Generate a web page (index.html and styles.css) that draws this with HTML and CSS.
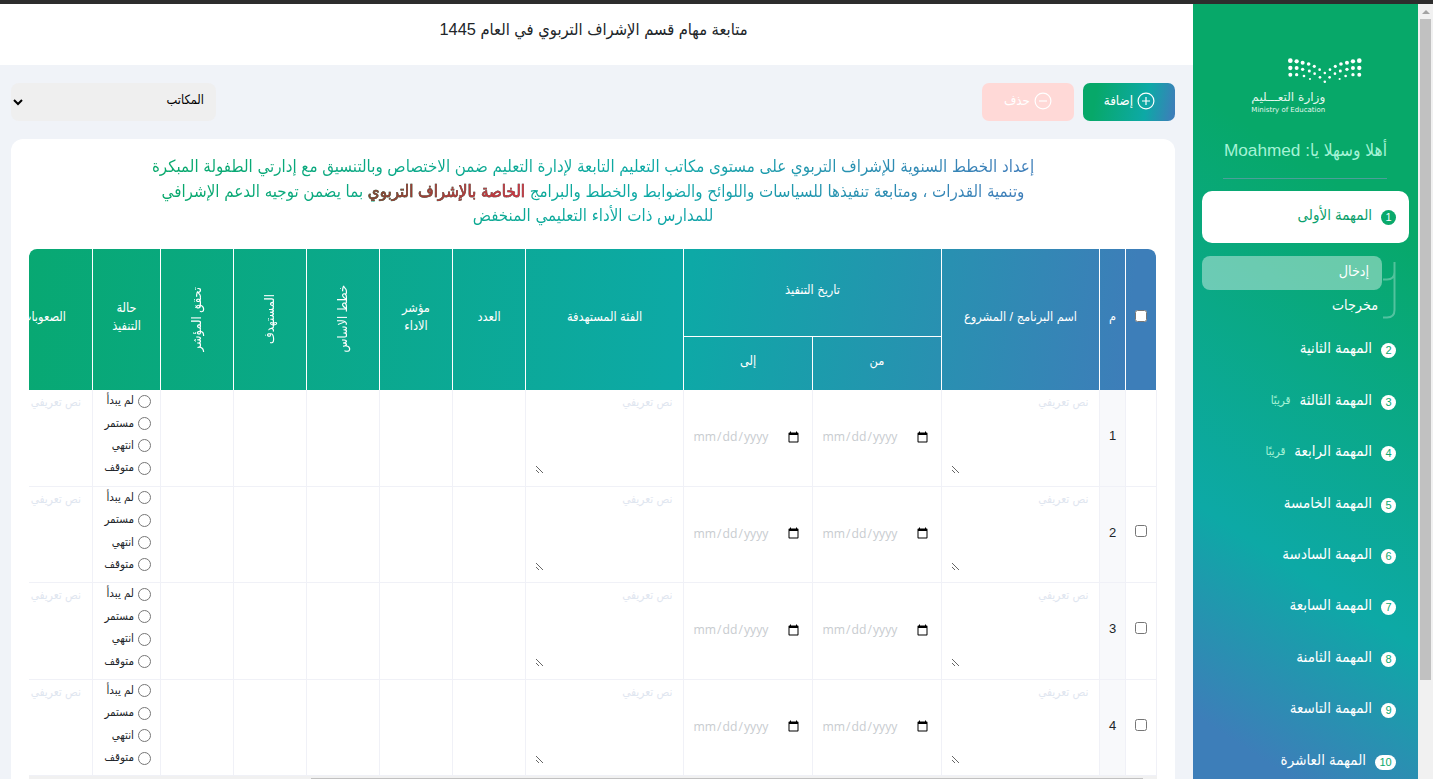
FILE: index.html
```html
<!DOCTYPE html>
<html lang="ar" dir="rtl">
<head>
<meta charset="utf-8">
<title>متابعة مهام قسم الإشراف التربوي</title>
<link rel="stylesheet" href="styles.css">
</head>
<body>
<div class="topline"></div>
<div class="app">
  <div class="scroll"><i class="scroll-up"></i><i class="scroll-thumb"></i></div>
  <aside class="side">
    <svg class="logo" viewBox="170 170 340 175">
      <g id="logo-dots" fill="#fff"></g>
      <text x="396" y="301" font-size="34" textLength="222" lengthAdjust="spacingAndGlyphs" fill="#e4f7ee">وزارة التعـــليم</text>
      <text class="en" x="174" y="335" font-size="21" textLength="222" lengthAdjust="spacingAndGlyphs" fill="#e4f7ee">Ministry of Education</text>
    </svg>
    <div class="hello"><span>أهلا وسهلا يا: Moahmed</span></div>
    <nav>
      <a class="item active"><b>1</b><span>المهمة الأولى</span></a>
      <div class="sub">
        <svg class="branch" width="14" height="58"><path d="M11.500 0V48Q11.500 55.500 4 55.500H0M11.500 10Q11.500 17.500 4 17.500H0" fill="none" stroke="#fff" stroke-opacity=".3" stroke-width="2"/></svg>
        <a class="sub-on"><span>إدخال</span></a>
        <a class="sub-off"><span>مخرجات</span></a>
      </div>
      <a class="item"><b>2</b><span>المهمة الثانية</span></a>
      <a class="item"><b>3</b><span>المهمة الثالثة</span><small>قريبًا</small></a>
      <a class="item"><b>4</b><span>المهمة الرابعة</span><small>قريبًا</small></a>
      <a class="item"><b>5</b><span>المهمة الخامسة</span></a>
      <a class="item"><b>6</b><span>المهمة السادسة</span></a>
      <a class="item"><b>7</b><span>المهمة السابعة</span></a>
      <a class="item"><b>8</b><span>المهمة الثامنة</span></a>
      <a class="item"><b>9</b><span>المهمة التاسعة</span></a>
      <a class="item"><b class="wide">10</b><span>المهمة العاشرة</span></a>
    </nav>
  </aside>
  <main class="main">
    <header class="head"><span>متابعة مهام قسم الإشراف التربوي في العام 1445</span></header>
    <div class="tools">
      <button class="btn add"><svg width="18" height="18" viewBox="0 0 18 18"><circle cx="9" cy="9" r="7.900"/><path d="M9 5V13M5 9H13"/></svg><span>إضافة</span></button>
      <button class="btn del"><svg width="18" height="18" viewBox="0 0 18 18"><circle cx="9" cy="9" r="7.900"/><path d="M5 9H13"/></svg><span>حذف</span></button>
      <select class="office"><option>المكاتب</option></select>
    </div>
    <section class="card">
      <div class="title">
        <p class="l1">إعداد الخطط السنوية للإشراف التربوي على مستوى مكاتب التعليم التابعة لإدارة التعليم ضمن الاختصاص وبالتنسيق مع إدارتي الطفولة المبكرة</p>
        <p class="l2">وتنمية القدرات ، ومتابعة تنفيذها للسياسات واللوائح والضوابط والخطط والبرامج <b>الخاصة بالإشراف التربوي</b> بما يضمن توجيه الدعم الإشرافي</p>
        <p class="l3">للمدارس ذات الأداء التعليمي المنخفض</p>
      </div>
      <div class="table">
        <div class="thead">
          <div><input type="checkbox"></div>
          <div><span>م</span></div>
          <div><span>اسم البرنامج / المشروع</span></div>
          <div class="period">
            <div class="period-top"><span>تاريخ التنفيذ</span></div>
            <div><span>من</span></div>
            <div><span>إلى</span></div>
          </div>
          <div><span>الفئة المستهدفة</span></div>
          <div><span>العدد</span></div>
          <div><span>مؤشر<br>الاداء</span></div>
          <div><span class="vert">خطط الاساس</span></div>
          <div><span class="vert">المستهدف</span></div>
          <div><span class="vert">تحقق المؤشر</span></div>
          <div><span>حالة<br>التنفيذ</span></div>
          <div class="last"><span>الصعوبات</span></div>
        </div>
        <div id="rows"></div>
        <div class="hscroll"><i></i></div>
      </div>
    </section>
  </main>
</div>
<script src="script.js"></script>
</body>
</html>
```
FILE: script.js
```js
// Logo: half of the dot pattern, mirrored round the middle column.
const dots = [
  [291,181,7],[291,203,6.5],[291,223,6],[310,183,6.5],[310,203,6],[310,223,5],
  [328,187,6],[328,207,5],[332,227,4],[346,191,5.5],[348,212,4.5],[350,236,3.2],
  [363,198,4.7],[364,220,4],[379,208,4],[380,231,4]
];
const dot = (x, y, r) => `<circle cx="${x}" cy="${y}" r="${r}"/>`;
document.getElementById('logo-dots').innerHTML =
  dots.map(([x, y, r]) => dot(x, y, r) + dot(789 - x, y, r)).join('') +
  dot(394.5, 218, 3.8) + dot(394.5, 244, 3.8);

const area = '<div><textarea placeholder="نص تعريفي"></textarea></div>';
const date = '<div><input type="date"></div>';
const states = ['لم يبدأ', 'مستمر', 'انتهي', 'متوقف'];
let html = '';
for (let n = 1; n <= 4; n++) {
  html += `<div class="row">
    <div>${n > 1 ? '<input type="checkbox">' : ''}</div>
    <div class="num"><span>${n}</span></div>
    ${area}${date}${date}${area}
    <div></div><div></div><div></div><div></div><div></div>
    <div class="states">${states.map(s => `<label><input type="radio" name="state${n}"><span>${s}</span></label>`).join('')}</div>
    ${area.replace('<div>', '<div class="last">')}
  </div>`;
}
document.getElementById('rows').innerHTML = html;
```
FILE: styles.css
```css
* { box-sizing: border-box; }
body {
  margin: 0;
  height: 779px;
  overflow: hidden;
  font-family: "Liberation Sans", "DejaVu Sans Condensed", "DejaVu Sans", sans-serif;
  font-stretch: condensed;
  color: #212529;
}
button, select, textarea, input { font-family: inherit; }
span { white-space: nowrap; }
.topline { height: 4px; background: #2d2d2d; }
.app { display: flex; height: 775px; direction: ltr; flex-direction: row-reverse; }
.scroll { width: 15px; background: #f1f1f1; display: flex; flex-direction: column; align-items: center; padding-top: 6px; }
.scroll-up { border: 4px solid transparent; border-top: 0; border-bottom: 4px solid #a3a3a3; width: 8px; }
.scroll-thumb { width: 11px; height: 661px; margin-top: 5px; background: #c1c1c1; }

.side {
  direction: rtl;
  width: 225px;
  padding: 54px 9px 0;
  overflow: hidden;
  background: linear-gradient(213deg, #07a869 25%, #0da9a6 70%, #3d7eb9 93%);
  color: #fff;
}
.logo { display: block; width: 113.300px; height: 58.300px; margin: -1px 45.700px 0 0; }
.logo text { direction: rtl; font-family: "DejaVu Sans Condensed", "DejaVu Sans", sans-serif; }
.logo text.en { direction: ltr; }
.hello { height: 64px; margin: 0 22px 12px 21px; padding-top: 23px; border-bottom: 1px solid #4c9f9a; color: #a5f3d6; font-size: 17.200px; line-height: 24px; white-space: nowrap; }
.item { display: flex; height: 51.400px; align-items: center; padding: 0 13px 5px; font-size: 15px; }
.item b { font-weight: 400; width: 15px; height: 15px; border-radius: 8px; background: #fff; color: #0aa96e; font-size: 11px; line-height: 14px; text-align: center; margin: 5px 0 0 9px; }
.item b.wide { width: 21px; }
.item small { font-size: 11.500px; color: #a5f3d6; margin-right: 9px; }
.item.active { height: 52px; padding-bottom: 4px; background: #fff; border-radius: 10px; color: #0a9f6c; }
.item.active b { background: #0aa96b; color: #fff; }
.sub { position: relative; padding: 13px 27px 0 0; height: 82px; font-size: 14.200px; }
.branch { position: absolute; right: 12px; top: 19px; }
.sub a { display: flex; height: 34px; align-items: center; padding-bottom: 5px; }
.sub-on { background: rgba(255,255,255,.4); border-radius: 8px; padding-right: 13px; }
.sub-off { padding-right: 4px; }

.main { direction: rtl; width: 1193px; background: #f0f3f8; }
.head { height: 61px; background: #fff; text-align: center; padding: 14px 6px 0 0; font-size: 16.400px; line-height: 22px; }
.tools { display: flex; gap: 9px; padding: 18px 18px 0 11px; }
.btn { width: 92px; height: 38px; border: 0; border-radius: 7px; display: flex; align-items: center; justify-content: flex-start; gap: 4px; color: #fff; font-size: 13.300px; padding: 0 20px 4px 0; }
.btn.del { padding-right: 22px; }
.btn svg { flex: none; margin-top: 2px; fill: none; stroke: #fff; stroke-width: 1.200; }
.add { background: linear-gradient(280deg, #3d7eb9 3%, #0da9a6 32%, #07a869 85%); }
.del { background: #ffd9d7; }
.office { width: 205px; height: 38px; margin-right: auto; border: 0; border-radius: 8px; background: #efefef; color: #000; padding: 0 8px 4px 0; font-size: 12.700px; }
.card { margin: 18px 18px 0 11px; height: 640px; background: #fff; border-radius: 12px 12px 0 0; padding: 16px 18px 0; }
.title { height: 94px; text-align: center; }
.title p { margin: 0; height: 24.500px; line-height: 24px; font-size: 16.820px; white-space: nowrap; color: transparent; background: linear-gradient(to left, #3d7eb9 13%, #0da9a6 45%, #07a869 90%); background-clip: text; -webkit-background-clip: text; }
.title .l2 { font-size: 16.820px; }
.title b { font-weight: 400; font-size: 16.800px; -webkit-text-stroke: .600px transparent; background: linear-gradient(to left, #d2323f, #84422f); background-clip: text; -webkit-background-clip: text; }

.table { width: 1128px; height: 530px; overflow: hidden; border-radius: 8px 8px 0 0; }
.thead, .row { display: grid; grid-template-columns: 32px 26px 158px 129px 129px 158px 73px 73px 73px 73px 73px 68px 63px; }
.thead { width: 1127px; margin-left: auto; margin-right: 1px; grid-template-columns: 31px 26px 158px 129px 129px 158px 73px 73px 73px 73px 73px 68px 63px; border-radius: 0 8px 0 0; height: 141px; background: linear-gradient(277deg, #3d7eb9 3%, #0da9a6 42%, #07a869 110%); color: #fff; font-size: 12.700px; line-height: 18px; text-align: center; }
.thead > div, .period > div { display: flex; align-items: center; justify-content: center; border-left: 1px solid #fff; padding-bottom: 5px; }
.thead > .period { grid-column: span 2; display: grid; grid-template: 88px 53px / 129px 129px; align-items: stretch; justify-content: start; border: 0; padding: 0; }
.period .period-top { grid-column: span 2; border-bottom: 1px solid #fff; }
.thead > .last { justify-content: flex-start; padding-right: 26px; overflow: hidden; border: 0; }
.thead input { margin: 0 0 3px; width: 12px; height: 12px; }
.thead .vert { writing-mode: vertical-rl; transform: rotate(180deg); margin-top: 4px; }
.row { height: 96.600px; }
.row > div { border-left: 1px solid #f0f1f7; border-bottom: 1px solid #f0f1f7; display: flex; align-items: center; justify-content: center; }
.row > div:first-child { border-right: 1px solid #f0f1f7; padding-bottom: 6px; }
.row input { margin: 0; }
.row input[type=checkbox] { width: 12px; height: 12px; }
.row > .num { background: #f8f9fb; font-size: 13px; padding-bottom: 4px; }
textarea { width: 140px; height: 80px; margin-bottom: 7px; border: 0; outline: 0; padding: 0 2px; background: transparent; font-size: 11.800px; line-height: 16px; resize: both; }
textarea::placeholder { color: #dfe6f0; }
.row > .last { border-left: 0; justify-content: flex-start; overflow: hidden; padding-right: 9px; }
.last textarea { flex: none; }
input[type=date] { direction: ltr; width: 109px; height: 24px; border: 0; padding: 0; background: transparent; color: #c8ccd0; font: 12.200px "Open Sans", sans-serif; transform: translate(-1px, -1px); }
.row > .states { flex-direction: column; align-items: stretch; justify-content: flex-start; padding: 0 9px 0 0; font-size: 11.500px; }
.states label { display: flex; height: 22.400px; align-items: center; gap: 4px; }
.states span { padding-bottom: 2px; }
.hscroll { height: 10px; margin-top: -1px; background: #f1f1f1; padding: 3px 14px 0 282px; }
.hscroll i { display: block; height: 7px; background: #c1c1c1; }
```
